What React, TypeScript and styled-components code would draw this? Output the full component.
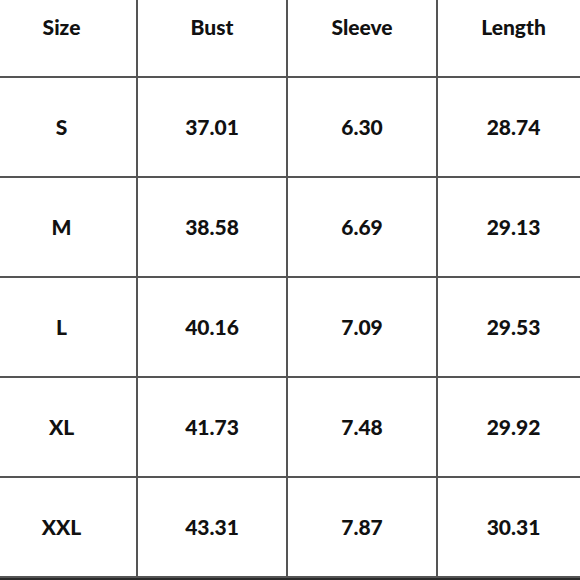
import React from "react";
import styled, { createGlobalStyle } from "styled-components";

const Global = createGlobalStyle`
  html, body { margin: 0; padding: 0; background: #fff; }
  body { width: 580px; height: 580px; overflow: hidden; font-family: Lato, "Open Sans", sans-serif; }
`;

const Frame = styled.div`
  width: 580px;
  height: 580px;
  overflow: hidden;
  background: #fff;
`;

const Table = styled.div`
  margin-left: -13px;
  display: grid;
  grid-template-columns: 151px 150px 150px 151px;
  grid-template-rows: 78px repeat(5, 100px);
  width: 602px;
  border-bottom: 2px solid #2a2a2a;
`;

const Cell = styled.div<{ $head?: boolean; $last?: boolean }>`
  display: flex;
  justify-content: center;
  align-items: ${(p) => (p.$head ? "flex-start" : "center")};
  padding-top: ${(p) => (p.$head ? "16px" : "0")};
  box-sizing: border-box;
  border-right: ${(p) => (p.$last ? "none" : "2px solid #555")};
  border-bottom: 2px solid #555;
  font-family: Lato, "Open Sans", sans-serif;
  font-weight: 900;
  font-size: 21px;
  line-height: 22px;
  color: #111;
`;

const headers = ["Size", "Bust", "Sleeve", "Length"];
const rows = [
  ["S", "37.01", "6.30", "28.74"],
  ["M", "38.58", "6.69", "29.13"],
  ["L", "40.16", "7.09", "29.53"],
  ["XL", "41.73", "7.48", "29.92"],
  ["XXL", "43.31", "7.87", "30.31"],
];

export default function App() {
  return (
    <Frame>
      <Global />
      <Table>
        {headers.map((h, i) => (
          <Cell key={h} $head $last={i === 3}>
            {h}
          </Cell>
        ))}
        {rows.map((r, ri) =>
          r.map((v, ci) => (
            <Cell key={`${ri}-${ci}`} $last={ci === 3}>
              {v}
            </Cell>
          ))
        )}
      </Table>
    </Frame>
  );
}
